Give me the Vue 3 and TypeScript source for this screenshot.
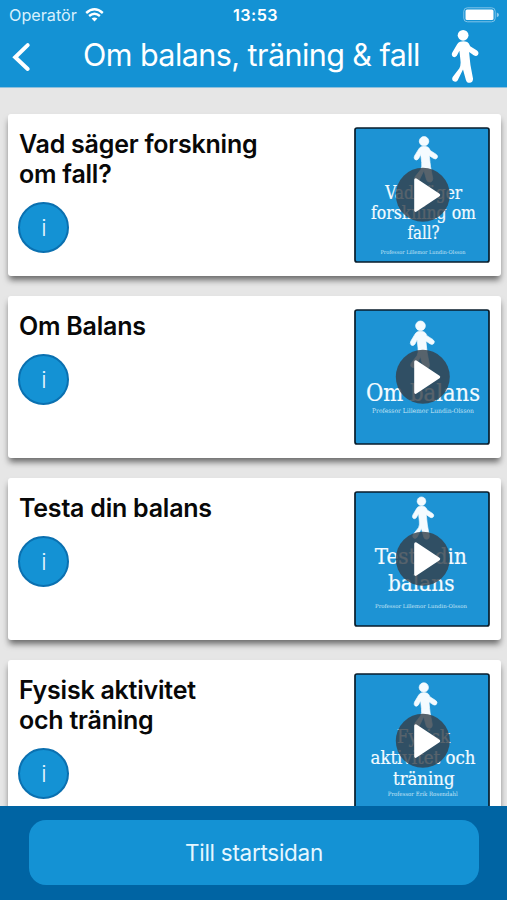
<script setup lang="ts">
interface Line {
  text: string
  x: number
  y: number
  width: number
  size: number
}

interface Lesson {
  title: string[]
  walker: string
  lines: Line[]
  author: Line
}

const lessons: Lesson[] = [
  {
    title: ['Vad säger forskning', 'om fall?'],
    walker: 'translate(59.4 8.8) scale(.88 .86)',
    lines: [
      { text: 'Vad säger', x: 31.2, y: 71.6, width: 77, size: 18.5 },
      { text: 'forskning om', x: 17, y: 91.6, width: 105, size: 18.5 },
      { text: 'fall?', x: 53.5, y: 111.6, width: 32, size: 18.5 },
    ],
    author: { text: 'Professor Lillemor Lundin-Olsson', x: 26.5, y: 127, width: 85, size: 5.3 },
  },
  {
    title: ['Om Balans'],
    walker: 'translate(55.6 11.2) scale(.9)',
    lines: [{ text: 'Om balans', x: 12, y: 91.6, width: 114, size: 24.5 }],
    author: { text: 'Professor Lillemor Lundin-Olsson', x: 18, y: 104.2, width: 102, size: 6.4 },
  },
  {
    title: ['Testa din balans'],
    walker: 'translate(57.8 5.2) scale(.8)',
    lines: [
      { text: 'Testa din', x: 20.8, y: 73.2, width: 92, size: 23 },
      { text: 'balans', x: 34, y: 99.7, width: 66.5, size: 23 },
    ],
    author: { text: 'Professor Lillemor Lundin-Olsson', x: 21, y: 116.5, width: 92, size: 5.3 },
  },
  {
    title: ['Fysisk aktivitet', 'och träning'],
    walker: 'translate(59.4 9) scale(.86)',
    lines: [
      { text: 'Fysisk', x: 43, y: 70.2, width: 53, size: 18.5 },
      { text: 'aktivitet och', x: 16.5, y: 91.2, width: 105, size: 18.5 },
      { text: 'träning', x: 39, y: 112, width: 61.5, size: 18.5 },
    ],
    author: { text: 'Professor Erik Rosendahl', x: 33.8, y: 122.7, width: 70, size: 5.8 },
  },
]
</script>

<template>
  <div class="screen">
    <svg class="defs" width="0" height="0" aria-hidden="true">
      <symbol id="walker" viewBox="0 0 28 56" overflow="visible">
        <circle cx="12.1" cy="6.3" r="5.4" />
        <path
          d="M9 12.8Q12.8 11.6 16.2 13.1Q18 14 19.2 17.2L26 21.6Q28.5 23.5 26.8 25.9Q25.3 27.7 22.7 26.2L18.1 23.1L18.9 31Q19.3 36 20.4 41L22 49.6Q22.2 53 19.2 53.8Q15.8 54.2 14.9 51L12 40.4L6.6 51.4Q4.8 53.7 2.3 52.1Q.4 50.6 1.7 48L8.4 39.3Q10.1 36 9.4 31L8.4 21.8L5.8 26.7Q3.8 29.2 1.7 27.5Q.1 26.1 1.3 23.4L6 15.5Q7.1 13.5 9 12.8Z"
        />
      </symbol>
    </svg>

    <header class="header">
      <div class="status">
        <span class="carrier">Operatör</span>
        <svg class="wifi" viewBox="0 0 19 14" width="19" height="14">
          <path d="M1.2 5Q9.5-2.3 17.8 5" />
          <path d="M4.1 8Q9.5 3.4 14.9 8" />
          <path class="wifi-dot" d="M6.6 10.6Q9.5 8.2 12.4 10.6L9.5 13.5Z" />
        </svg>
        <span class="clock">13:53</span>
        <svg class="battery" viewBox="0 0 37 16" width="37" height="16">
          <rect x=".8" y=".8" width="31.4" height="14" rx="3.5" />
          <rect class="level" x="2.5" y="2.5" width="28" height="10.6" rx="1.5" />
          <path class="level tip" d="M33.8 5.4Q36 6 36 7.8T33.8 10.2Z" />
        </svg>
      </div>
      <div class="nav">
        <svg class="back" viewBox="0 0 20 30" width="20" height="30">
          <path d="M16.7 3.1L4.2 15.3L16.7 27" />
        </svg>
        <h1 class="heading">Om balans, träning &amp; fall</h1>
        <svg class="logo" viewBox="0 0 28 56" width="28" height="56"><use href="#walker" width="28" height="56" /></svg>
      </div>
    </header>

    <main class="list">
      <article v-for="lesson in lessons" :key="lesson.title[0]" class="card">
        <div class="info">
          <h2 class="title">
            <span v-for="part in lesson.title" :key="part" class="title-line">{{ part }}</span>
          </h2>
          <button class="info-button" type="button">i</button>
        </div>
        <svg class="thumb" viewBox="0 0 136 136" width="136" height="136">
          <rect class="poster" x="1" y="1" width="134" height="134" rx="2" />
          <g class="figure" :transform="lesson.walker"><use href="#walker" width="28" height="56" /></g>
          <text
            v-for="line in lesson.lines"
            :key="line.text"
            class="line"
            :x="line.x"
            :y="line.y"
            :font-size="line.size"
            :textLength="line.width"
            lengthAdjust="spacingAndGlyphs"
          >{{ line.text }}</text>
          <text
            class="author"
            :x="lesson.author.x"
            :y="lesson.author.y"
            :font-size="lesson.author.size"
            :textLength="lesson.author.width"
            lengthAdjust="spacingAndGlyphs"
          >{{ lesson.author.text }}</text>
          <circle class="play-disc" cx="68.8" cy="67.8" r="27" />
          <path class="play" d="M61.7 52.8L84.7 68L61.7 83.3Z" />
        </svg>
      </article>
    </main>

    <footer class="footer">
      <button class="home" type="button">Till startsidan</button>
    </footer>
  </div>
</template>

<style>
body {
  margin: 0;
}
</style>

<style scoped>
.screen {
  display: flex;
  flex-direction: column;
  width: 507px;
  height: 900px;
  overflow: hidden;
  background: #e6e6e6;
  font-family: Inter, "Liberation Sans", sans-serif;
}
.defs {
  position: absolute;
}
.header {
  box-sizing: border-box;
  flex: none;
  height: 88px;
  background: #1492d4;
  border-bottom: 1px solid #8fc0dc;
  color: #fff;
}
.status {
  display: grid;
  grid-template-columns: 76px 1fr 46px 1fr 37px;
  align-items: center;
  height: 30px;
  padding: 0 7px 0 9px;
}
.carrier {
  font-size: 16.2px;
  color: #d8f0fc;
  white-space: nowrap;
}
.wifi {
  fill: none;
  stroke: #fff;
  stroke-width: 2.4;
}
.wifi-dot {
  fill: #fff;
  stroke: none;
}
.clock {
  margin-left: -18px;
  font-size: 16.2px;
  font-weight: 600;
  letter-spacing: 0.45px;
  white-space: nowrap;
}
.battery {
  grid-column: 5;
  fill: none;
  stroke: #7fc4e8;
  stroke-width: 1;
}
.level {
  fill: #fff;
  stroke: none;
}
.tip {
  fill: #8ccbeb;
}
.nav {
  display: flex;
  align-items: flex-start;
  padding: 0 28px 0 10px;
}
.back {
  margin: 12px 0 0 1px;
  fill: none;
  stroke: #fff;
  stroke-width: 4;
  stroke-linecap: round;
  stroke-linejoin: miter;
}
.heading {
  flex: 1;
  margin: 5px 0 0 52px;
  font-size: 30.5px;
  line-height: 40px;
  font-weight: 400;
  letter-spacing: -0.56px;
  white-space: nowrap;
}
.logo {
  margin-top: -1px;
  fill: #fff;
}
.list {
  flex: 1;
  min-height: 0;
  overflow: hidden;
  display: flex;
  flex-direction: column;
  gap: 20px;
  padding: 26px 6.5px 0 8px;
}
.card {
  box-sizing: border-box;
  flex: none;
  display: flex;
  justify-content: space-between;
  height: 162px;
  padding: 13px 10.5px 0 11px;
  background: #fff;
  border-radius: 3px;
  box-shadow: 0 5px 6px -1px rgba(0, 0, 0, 0.55);
}
.title {
  margin: 1.5px 0 13.5px;
  color: #080808;
  font-size: 25px;
  line-height: 30px;
  font-weight: 600;
  letter-spacing: -0.23px;
}
.title-line {
  display: block;
  white-space: nowrap;
}
.info-button {
  display: block;
  width: 51px;
  height: 51px;
  margin-left: -0.7px;
  padding: 0;
  border: 2px solid #0a70b0;
  border-radius: 50%;
  background: #1492d4;
  color: #e6f7ff;
  font: 300 23px Inter, sans-serif;
}
.thumb {
  flex: none;
  font-family: "DejaVu Serif Condensed", "DejaVu Serif", serif;
  fill: #f4fbff;
}
.poster {
  fill: #1d93d4;
  stroke: #081d2b;
  stroke-width: 1.7;
}
.figure {
  stroke: #f4fbff;
  stroke-width: 0.8;
}
.line {
  stroke: #f4fbff;
  stroke-width: 0.2;
}
.author {
  fill: #c5e4f5;
}
.play-disc {
  fill: #35414c;
  fill-opacity: 0.82;
}
.play {
  fill: #fff;
  stroke: #fff;
  stroke-width: 3;
  stroke-linejoin: round;
}
.footer {
  box-sizing: border-box;
  flex: none;
  height: 94px;
  padding: 14px 28px 15px 29px;
  background: #0064a3;
}
.home {
  display: block;
  width: 100%;
  height: 65px;
  border: 0;
  border-radius: 17px;
  background: #1492d4;
  color: #e6f7ff;
  font: 400 22.5px Inter, sans-serif;
  letter-spacing: -0.28px;
}
</style>
